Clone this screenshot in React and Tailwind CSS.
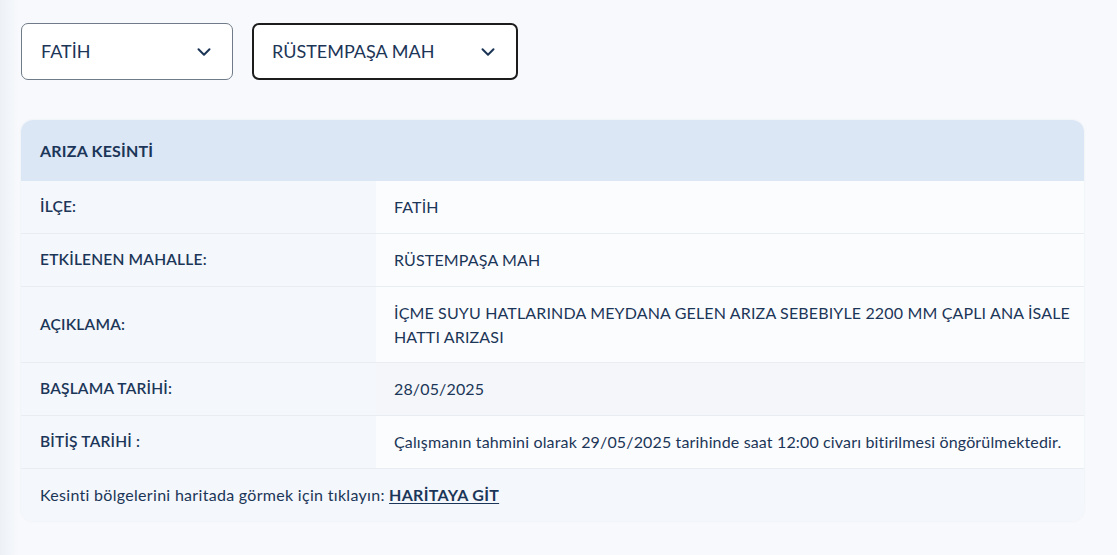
import { ChevronDown } from 'lucide-react'

const ROWS = [
  { label: 'İLÇE:', value: 'FATİH' },
  { label: 'ETKİLENEN MAHALLE:', value: 'RÜSTEMPAŞA MAH' },
  { label: 'AÇIKLAMA:', value: 'İÇME SUYU HATLARINDA MEYDANA GELEN ARIZA SEBEBIYLE 2200 MM ÇAPLI ANA İSALE HATTI ARIZASI', tall: true },
  { label: 'BAŞLAMA TARİHİ:', value: '28/05/2025', shaded: true },
  { label: 'BİTİŞ TARİHİ :', value: 'Çalışmanın tahmini olarak 29/05/2025 tarihinde saat 12:00 civarı bitirilmesi öngörülmektedir.' },
]

function Dropdown({ value, active, width }) {
  return (
    <div
      className={`flex items-center justify-between h-[57px] pr-[17px] rounded-[7px] bg-white ${width} ${
        active ? 'border-2 border-[#1c1c1c] pl-[18px]' : 'border border-[#6f7b88] pl-[19px]'
      }`}
    >
      <span className="text-[18px] text-[#1c3557]">{value}</span>
      <ChevronDown size={22} strokeWidth={2.2} className="text-[#1c3557]" />
    </div>
  )
}

export default function App() {
  return (
    <div className="min-h-[555px] bg-[#f7f9fc] font-['Lato',sans-serif] text-[#1b3658] relative">
      <div className="absolute inset-y-0 left-0 w-[18px] bg-gradient-to-r from-[#edf1f6] to-[#f7f9fc]" />
      <div className="relative pl-[21px] pt-[23px] w-[1084px]">
        <div className="flex gap-[19px]">
          <Dropdown value="FATİH" width="w-[212px]" />
          <Dropdown value="RÜSTEMPAŞA MAH" width="w-[266px]" active />
        </div>

        <div className="mt-[40px] rounded-[12px] overflow-hidden shadow-[0_0_3px_rgba(30,60,100,0.05)]">
          <div className="h-[61px] bg-[#dce7f6] flex items-center px-[19px] text-[16px] font-bold tracking-[0.2px]">ARIZA KESİNTİ</div>
          {ROWS.map(row => (
            <div key={row.label} className={`flex border-b border-[#e9edf2] ${row.tall ? 'h-[76px]' : 'h-[53px]'}`}>
              <div className="w-[355px] shrink-0 bg-[#f4f7fb] flex items-center px-[19px] text-[15.5px] font-semibold tracking-[0.2px]">
                {row.label}
              </div>
              <div
                className={`flex-1 flex items-center pl-[18px] pr-[14px] text-[16px] leading-[24px] tracking-[0.15px] ${
                  row.shaded ? 'bg-[#f4f6f9]' : 'bg-[#fbfcfe]'
                }`}
              >
                {row.value}
              </div>
            </div>
          ))}
          <div className="h-[52px] bg-[#f4f7fb] flex items-center px-[19px] text-[16px] tracking-[0.3px]">
            Kesinti bölgelerini haritada görmek için tıklayın:&nbsp;
            <a href="#" className="font-bold underline underline-offset-2">HARİTAYA GİT</a>
          </div>
        </div>
      </div>
    </div>
  )
}
